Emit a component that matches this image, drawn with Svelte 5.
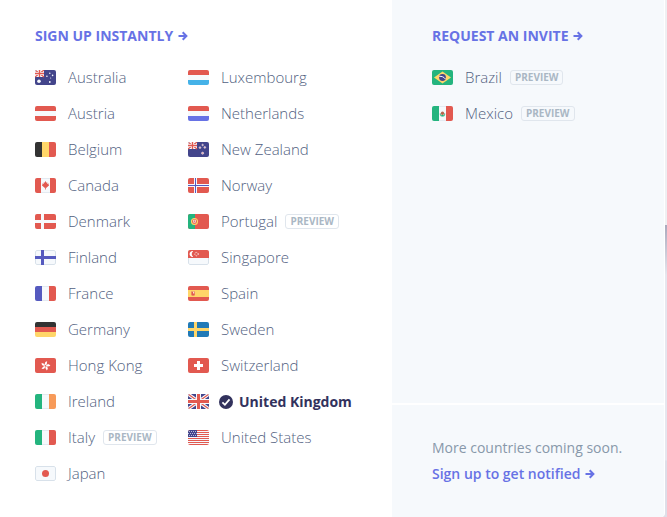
<script lang="ts">
  type Country = { code: string; name: string; preview?: boolean };

  const white = '#f6f9fc';
  const red = '#e25950';
  const green = '#24b47e';
  const yellow = '#ffd669';
  const blue = '#555abf';
  const navy = '#43458b';

  const columns: Country[][] = [
    [
      { code: 'au', name: 'Australia' },
      { code: 'at', name: 'Austria' },
      { code: 'be', name: 'Belgium' },
      { code: 'ca', name: 'Canada' },
      { code: 'dk', name: 'Denmark' },
      { code: 'fi', name: 'Finland' },
      { code: 'fr', name: 'France' },
      { code: 'de', name: 'Germany' },
      { code: 'hk', name: 'Hong Kong' },
      { code: 'ie', name: 'Ireland' },
      { code: 'it', name: 'Italy', preview: true },
      { code: 'jp', name: 'Japan' }
    ],
    [
      { code: 'lu', name: 'Luxembourg' },
      { code: 'nl', name: 'Netherlands' },
      { code: 'nz', name: 'New Zealand' },
      { code: 'no', name: 'Norway' },
      { code: 'pt', name: 'Portugal', preview: true },
      { code: 'sg', name: 'Singapore' },
      { code: 'es', name: 'Spain' },
      { code: 'se', name: 'Sweden' },
      { code: 'ch', name: 'Switzerland' },
      { code: 'gb', name: 'United Kingdom' },
      { code: 'us', name: 'United States' }
    ]
  ];

  const invites: Country[] = [
    { code: 'br', name: 'Brazil', preview: true },
    { code: 'mx', name: 'Mexico', preview: true }
  ];

  // Flags made of three equal bands
  const vertical: Record<string, string[]> = {
    be: ['#333333', yellow, red],
    fr: [blue, white, red],
    ie: [green, white, '#f79a59'],
    it: [green, white, red],
    mx: [green, white, red]
  };

  const horizontal: Record<string, string[]> = {
    at: [red, white, red],
    de: ['#333333', red, yellow],
    lu: [red, white, '#45b2e8'],
    nl: [red, white, '#6772e5']
  };

  // Nordic crosses: field, cross, cross width
  const crosses: Record<string, [string, string, number]> = {
    dk: [red, white, 3],
    fi: [white, blue, 3],
    no: [red, white, 3],
    se: ['#217ab7', yellow, 3]
  };

  let selected = $state('gb');
</script>

{#snippet arrow()}
  <svg class="arrow" viewBox="0 0 10 10" aria-hidden="true">
    <path d="M0.5 5H8M4.7 1.3L8.4 5L4.7 8.7" fill="none" stroke="currentColor" stroke-width="2" />
  </svg>
{/snippet}

{#snippet canton()}
  <rect width="9" height="7" fill={white} />
  <path d="M0 0L9 7M9 0L0 7" stroke={red} stroke-width="1.2" />
  <path d="M4.5 0V7M0 3.5H9" stroke={white} stroke-width="3" />
  <path d="M4.5 0V7M0 3.5H9" stroke={red} stroke-width="1.4" />
{/snippet}

{#snippet flag(code: string)}
  <svg class="flag" viewBox="0 0 21 15" aria-hidden="true">
    {#if vertical[code]}
      {#each vertical[code] as fill, i}
        <rect x={i * 7} width="7" height="15" {fill} />
      {/each}
      {#if vertical[code][1] === white}
        <path d="M7 0.5H14M7 14.5H14" stroke="#e3eaf1" />
      {/if}
      {#if code === 'mx'}
        <path d="M8.3 7.5C8.3 11 12.7 11 12.7 7.5" fill="none" stroke="#5fc3a0" stroke-width="1.2" />
        <circle cx="10.5" cy="7.3" r="1.7" fill="#b5684f" />
        <path d="M9.5 9.5H11.5" stroke={green} />
      {/if}
    {:else if horizontal[code]}
      {#each horizontal[code] as fill, i}
        <rect y={i * 5} width="21" height="5" {fill} />
      {/each}
    {:else if crosses[code]}
      <rect width="21" height="15" fill={crosses[code][0]} />
      {#if code === 'fi'}
        <rect x="0.5" y="0.5" width="20" height="14" rx="1.5" fill="none" stroke="#d8e1ea" />
      {/if}
      <path d="M7.5 0V15M0 7.5H21" stroke={crosses[code][1]} stroke-width={crosses[code][2]} />
      {#if code === 'no'}
        <path d="M7.5 0V15M0 7.5H21" stroke={blue} />
      {/if}
    {:else if code === 'au' || code === 'nz'}
      <rect width="21" height="15" fill={navy} />
      {@render canton()}
      {#if code === 'au'}
        <circle cx="4" cy="11.3" r="1.8" fill={white} />
        <g fill={white}>
          <circle cx="14.8" cy="3.2" r="0.7" />
          <circle cx="11.9" cy="6.2" r="0.8" />
          <circle cx="17.6" cy="5.4" r="0.8" />
          <circle cx="15.7" cy="8" r="0.5" />
          <circle cx="14.8" cy="12" r="0.9" />
        </g>
      {:else}
        <g fill="#e7a5ae" stroke={white} stroke-width="0.5">
          <circle cx="14.6" cy="3" r="0.8" />
          <circle cx="12" cy="5.6" r="0.9" />
          <circle cx="16.8" cy="5.4" r="0.9" />
          <circle cx="14.6" cy="11.2" r="1.1" />
        </g>
      {/if}
    {:else if code === 'ca'}
      <rect width="21" height="15" fill={white} />
      <path d="M6 0.5H15M6 14.5H15" stroke="#e3eaf1" />
      <path d="M0 0H6V15H0ZM15 0H21V15H15Z" fill={red} />
      <path
        d="M10.5 3L11.5 4.8L12.4 4.4L12.2 6L13.8 5.6L13.5 6.8L14.2 7.3L12 9.2V9.8L10.9 9.6V11.5H10.1V9.6L9 9.8V9.2L6.8 7.3L7.5 6.8L7.2 5.6L8.8 6L8.6 4.4L9.5 4.8Z"
        fill={red}
      />
    {:else if code === 'hk'}
      <rect width="21" height="15" fill={red} />
      {#each [10, 82, 154, 226, 298] as angle}
        <path
          d="M10.4 7.2C8.8 5.8 9.2 3.6 11.4 3C10.9 4.2 12.3 5.4 10.8 7.2Z"
          fill="#fff"
          transform="rotate({angle} 10.5 7.8)"
        />
      {/each}
    {:else if code === 'jp'}
      <rect x="0.5" y="0.5" width="20" height="14" rx="1.5" fill={white} stroke="#d8e1ea" />
      <circle cx="10.5" cy="7.5" r="3.5" fill={red} />
    {:else if code === 'pt'}
      <rect width="21" height="15" fill={red} />
      <rect width="7" height="15" fill={green} />
      <circle cx="6.5" cy="7.5" r="3" fill={red} stroke={yellow} stroke-width="1.1" />
      <path d="M5.3 5.8H7.7V7.8C7.7 9.6 5.3 9.6 5.3 7.8Z" fill={white} />
      <path d="M6.5 6.3V8.5" stroke={red} stroke-width="0.8" />
    {:else if code === 'sg'}
      <rect x="0.5" y="0.5" width="20" height="14" rx="1.5" fill={white} stroke="#d8e1ea" />
      <rect width="21" height="8" fill={red} />
      <path d="M5.2 1.2A2.9 2.9 0 1 0 5.2 6.8A3.4 3.4 0 0 1 5.2 1.2Z" fill="#fff" />
      <circle cx="8.5" cy="4.1" r="1.7" fill="none" stroke="#fff" stroke-width="1" stroke-dasharray="1 1.1" />
    {:else if code === 'es'}
      <rect width="21" height="15" fill={red} />
      <rect y="4" width="21" height="7" fill={yellow} />
      <path d="M3 5V9.6H7V5" fill="#f0a66b" />
      <path d="M3.6 6H6.6V8.4C6.6 10 3.6 10 3.6 8.4Z" fill={red} />
      <path d="M5 5.8H6.2V7.4H5Z" fill="#fbe4d8" />
    {:else if code === 'ch'}
      <rect width="21" height="15" fill={red} />
      <path d="M10.5 3V12M6 7.5H15" stroke="#fff" stroke-width="3" />
    {:else if code === 'gb'}
      <rect width="21" height="15" fill={navy} />
      <path d="M0 0L21 15M21 0L0 15" stroke={white} stroke-width="3.4" />
      <path d="M0 0L21 15M21 0L0 15" stroke={red} stroke-width="1.2" />
      <path d="M10.5 0V15M0 7.5H21" stroke={white} stroke-width="5" />
      <path d="M10.5 0V15M0 7.5H21" stroke={red} stroke-width="3" />
    {:else if code === 'us'}
      <rect width="21" height="15" fill={white} />
      {#each [0, 1, 2, 3, 4, 5, 6, 7] as i}
        <rect y={i * 2} width="21" height="1" fill={red} />
      {/each}
      <rect width="9" height="7" fill={navy} />
      <path d="M1 1.5H9M0 3.5H9M1 5.5H9" stroke="#b9bbdc" stroke-dasharray="1 1" />
    {:else if code === 'br'}
      <rect width="21" height="15" fill={green} />
      <path d="M10.5 1.5L19 7.5L10.5 13.5L2 7.5Z" fill={yellow} />
      <circle cx="10.5" cy="7.5" r="3.4" fill={navy} />
      <path d="M7.3 6.4C9.6 6 12 7 13.4 9" fill="none" stroke={white} stroke-width="1" />
    {/if}
  </svg>
{/snippet}

{#snippet countryList(countries: Country[])}
  <ul class="country-list">
    {#each countries as country}
      <li>
        <a
          href="#{country.code}"
          class="country"
          class:selected={selected === country.code}
          onclick={() => (selected = country.code)}
        >
          {@render flag(country.code)}
          {#if selected === country.code}
            <svg class="check" viewBox="0 0 14 14" aria-hidden="true">
              <circle cx="7" cy="7" r="7" fill="currentColor" />
              <path d="M3.4 7.4L5.9 9.8L10.5 4.3" fill="none" stroke="#fff" stroke-width="1.8" />
            </svg>
          {/if}
          <span class="name">{country.name}</span>
          {#if country.preview}
            <span class="badge">Preview</span>
          {/if}
        </a>
      </li>
    {/each}
  </ul>
{/snippet}

<div class="picker">
  <section class="signup">
    <h2><a href="#signup">Sign up instantly {@render arrow()}</a></h2>
    <div class="columns">
      {#each columns as countries}
        {@render countryList(countries)}
      {/each}
    </div>
  </section>

  <aside class="side">
    <section class="invite">
      <h2><a href="#invite">Request an invite {@render arrow()}</a></h2>
      {@render countryList(invites)}
    </section>
    <section class="notify">
      <p>More countries coming soon.</p>
      <a href="#notify">Sign up to get notified {@render arrow()}</a>
    </section>
  </aside>
</div>

<style>
  :global(body) {
    margin: 0;
    background: linear-gradient(#efeff2 225px, #a9a9bd 225px, #e6e6ee 275px, #e6e6ee 460px, #dedee8 461px);
  }

  .picker {
    display: flex;
    min-height: 100vh;
    margin-right: 2px;
    padding-right: 1px;
    box-sizing: border-box;
    background: #fff;
    border-bottom-right-radius: 4px;
    font-family: 'Open Sans', 'Noto Sans', sans-serif;
    font-size: 15px;
    color: #525f7f;
  }

  .signup {
    flex: 1;
    padding: 24px 0 25px 35px;
  }

  h2 {
    margin: 0 0 12px;
    font-size: 14px;
    font-weight: 700;
    line-height: 24px;
    text-transform: uppercase;
  }

  h2 a,
  .notify a {
    color: #6772e5;
    text-decoration: none;
  }

  .arrow {
    width: 10px;
    height: 10px;
    margin-left: 1px;
  }

  .columns {
    display: grid;
    grid-template-columns: 153px 1fr;
  }

  .country-list {
    margin: 0;
    padding: 0;
    list-style: none;
  }

  .country {
    display: flex;
    align-items: center;
    box-sizing: border-box;
    height: 36px;
    padding-bottom: 1px;
    color: #525f7f;
    font-weight: 300;
    line-height: 21px;
    white-space: nowrap;
    text-decoration: none;
  }

  .flag {
    flex: none;
    width: 21px;
    height: 15px;
    margin-right: 12px;
    border-radius: 2px;
  }

  .selected {
    color: #32325d;
    font-size: 14px;
    font-weight: 700;
  }

  .selected .flag {
    margin-right: 10px;
  }

  .check {
    width: 14px;
    height: 14px;
    margin-right: 6px;
  }

  .badge {
    margin-left: 8px;
    padding: 0 4px;
    border: 1px solid #e0e6ed;
    border-radius: 3px;
    color: #aab7c4;
    font-size: 10px;
    font-weight: 700;
    line-height: 13px;
    text-transform: uppercase;
  }

  .side {
    display: grid;
    flex: 0 0 272px;
    grid-template-rows: 1fr auto;
    gap: 2px;
  }

  .invite,
  .notify {
    background: #f6f9fc;
  }

  .invite {
    padding: 24px 40px;
  }

  .notify {
    padding: 30px 40px;
    border-bottom-right-radius: 3px;
    font-size: 14px;
    line-height: 26px;
    white-space: nowrap;
  }

  .notify p {
    margin: 0;
    color: #8898aa;
  }

  .notify a {
    font-weight: 600;
  }
</style>
